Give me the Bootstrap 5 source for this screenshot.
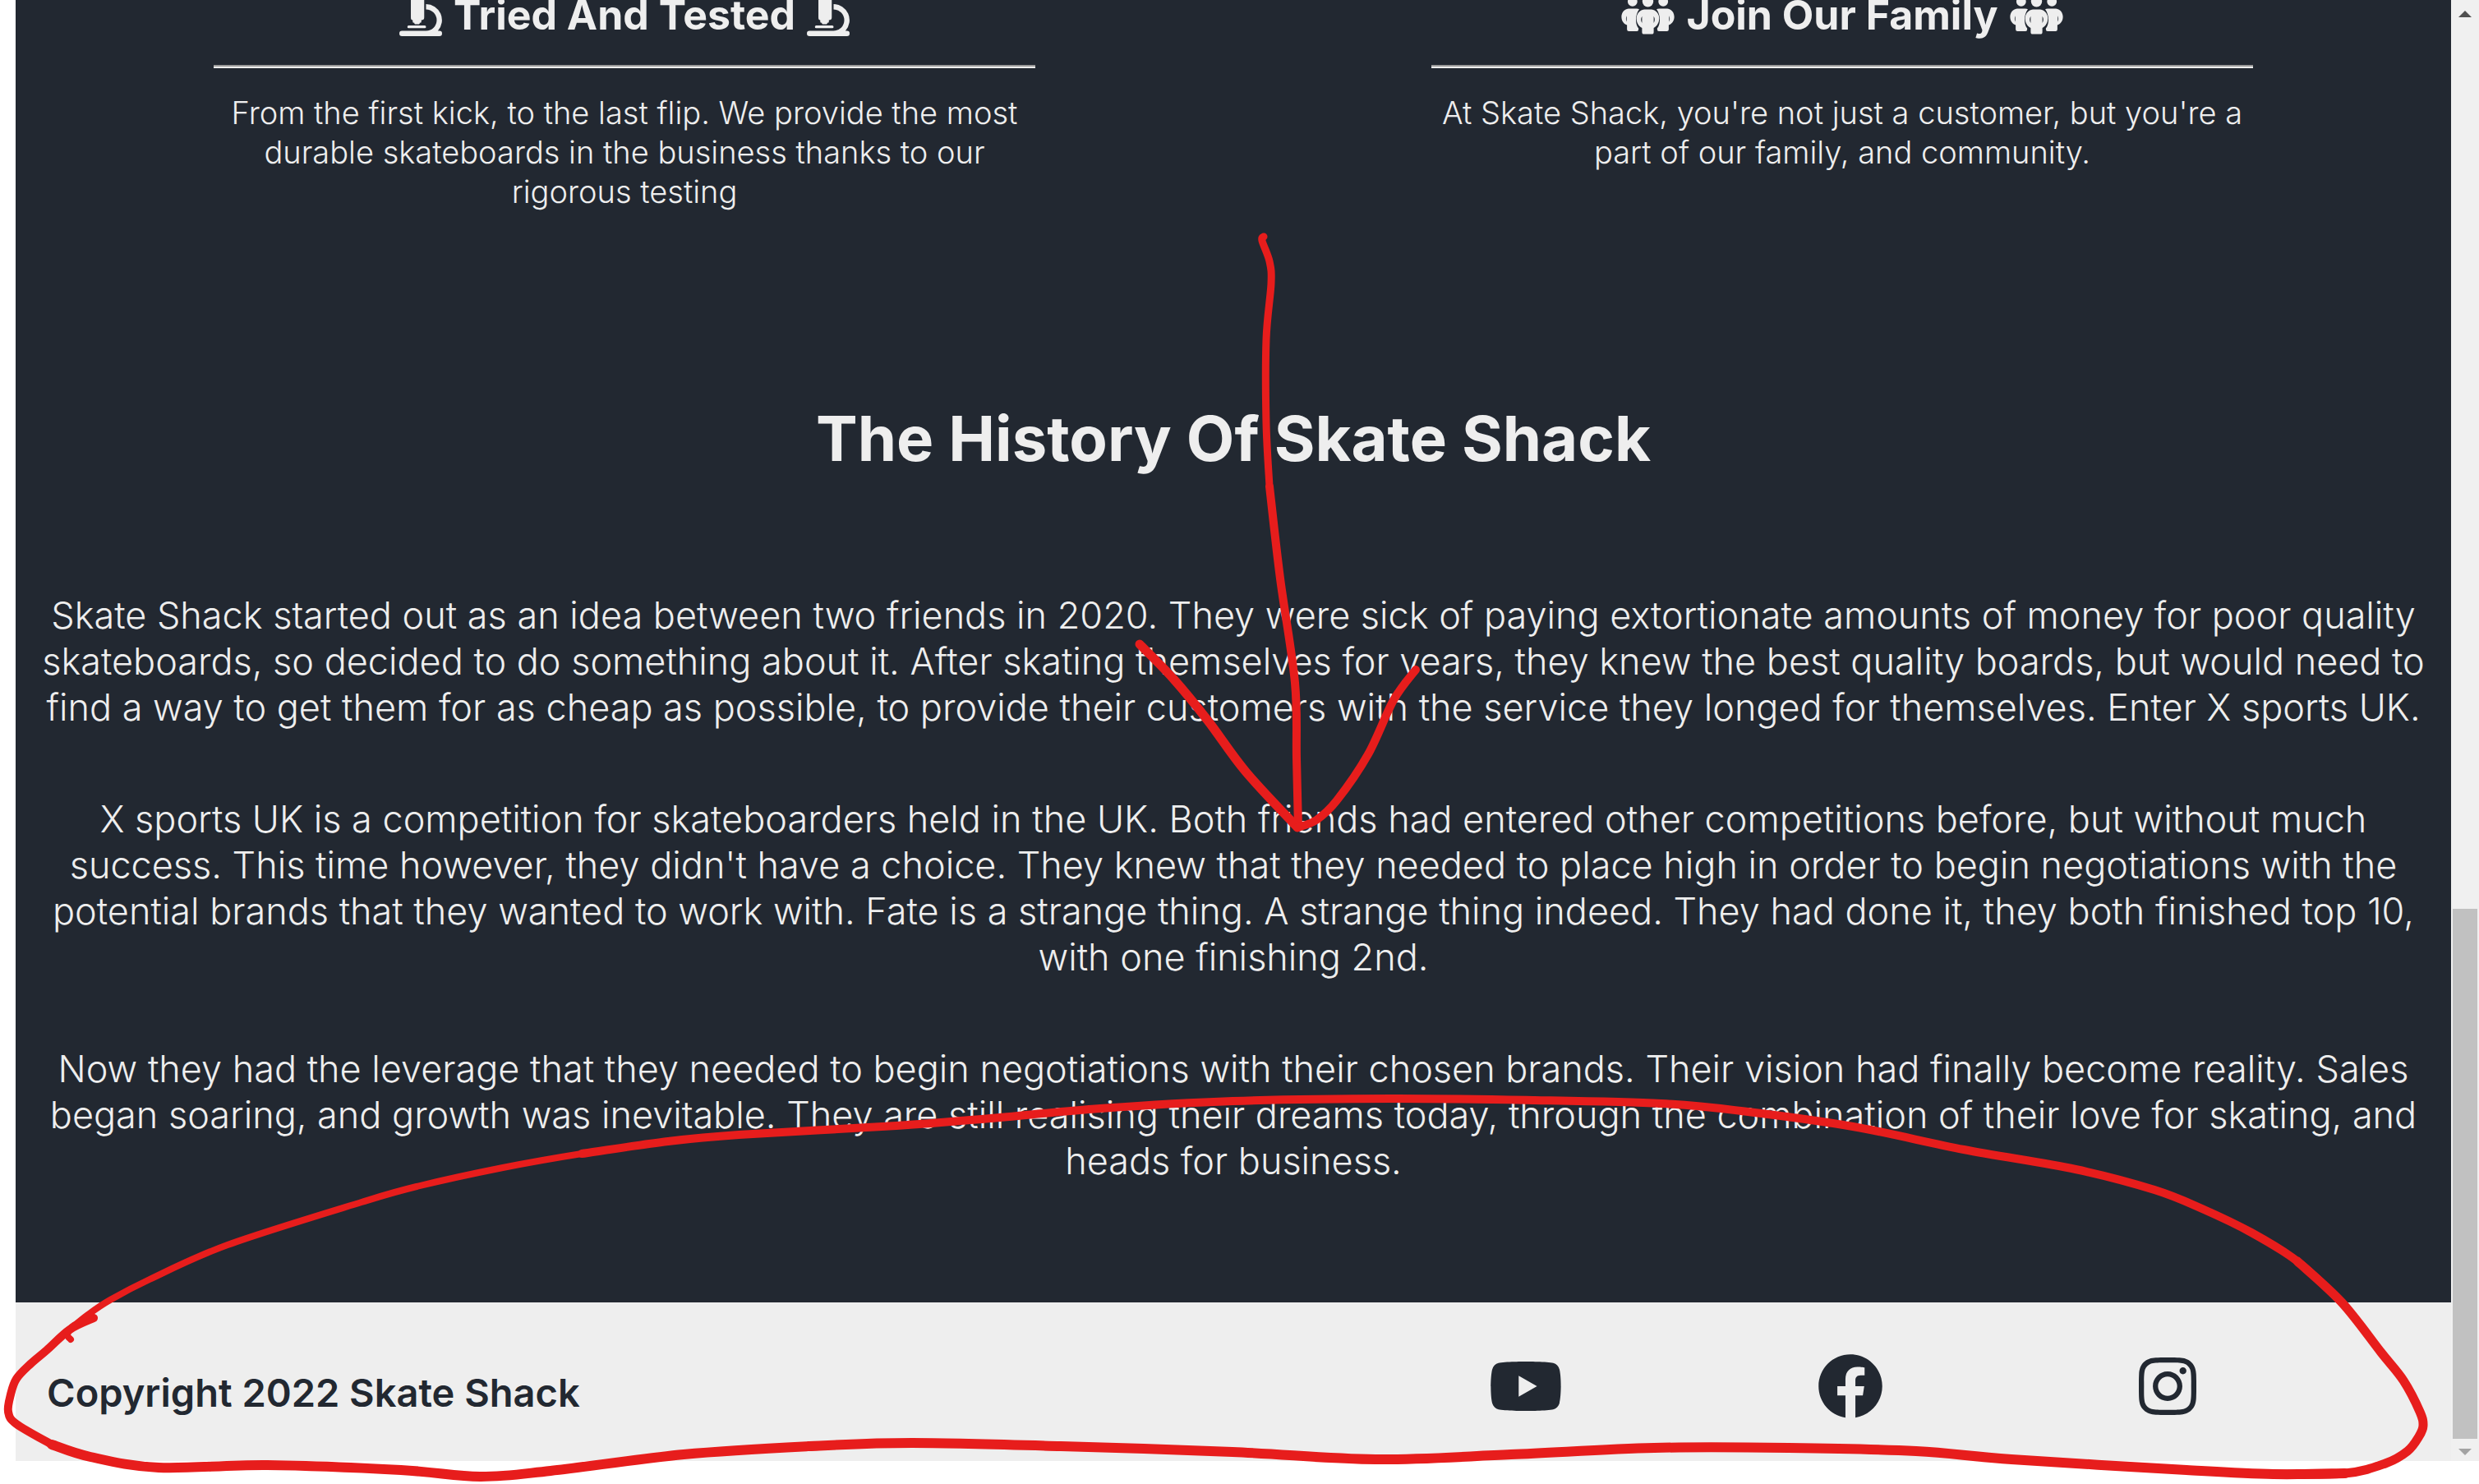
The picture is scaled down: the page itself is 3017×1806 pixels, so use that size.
<!DOCTYPE html>
<html lang="en">
<head>
<meta charset="utf-8">
<meta name="viewport" content="width=device-width, initial-scale=1">
<title>Skate Shack</title>
<link href="https://cdn.jsdelivr.net/npm/bootstrap@5.3.0/dist/css/bootstrap.min.css" rel="stylesheet">
<style>
  body { background: #fff; font-family: Inter, "Liberation Sans", sans-serif; font-weight: 300; }
  .page-wrap { padding: 0 0 28px 19px; }
  .site-main { background: #222831; color: #eee; padding-bottom: 144px; }
  .feature-inner { max-width: 1000px; }
  .feature-title { gap: 14px; font-size: 50px; line-height: 36px; font-weight: 700; height: 36px; white-space: nowrap; }
  .feature-title svg { height: 52px; flex: none; }
  .feature-rule { border: 0; border-top: 2px solid #9a9a9a; border-bottom: 2px solid #eee; opacity: 1; margin: 43px 0 30px; }
  .feature-text { font-size: 38px; line-height: 48px; }
  .history { padding: 228px 30px 0; }
  .history-title { font-size: 76px; line-height: 96px; font-weight: 700; margin-bottom: 140px; }
  .history-text { font-size: 45px; line-height: 56px; margin-bottom: 80px; }
  .site-footer { background: #eee; color: #222831; padding: 62px 0 51px; }
  .copyright { font-size: 47px; line-height: 64px; font-weight: 600; padding-left: 38px; }
  .social a { color: inherit; }
  .social svg { height: 80px; display: block; }
  .scroll-track { width: 34px; background: #f0f0f0; }
  .scroll-end { height: 34px; }
  .scroll-end-low { height: 27px; }
  .scroll-space { flex: 1072 1 0; }
  .scroll-thumb { flex: 645 1 0; background: #c1c1c1; margin: 0 2px; }
  .ink { pointer-events: none; fill: none; stroke: #e71d1c; stroke-linecap: round; stroke-linejoin: round; }
</style>
</head>
<body>
<svg class="d-none">
  <symbol id="microscope" viewBox="0 0 512 512">
    <path fill="currentColor" d="M160 320v16q0 16 16 16h4v8q0 8 8 8h48q8 0 8-8v-8h4q16 0 16-16v-16q34 0 34-32V64q0-32-32-32V16q0-16-16-16h-64q-16 0-16 16v16q-32 0-32 32v224q0 32 22 32zM112 384h192q16 0 16 16t-16 16H112q-16 0-16-16t16-16z"/>
    <path fill="currentColor" d="M320 128a192 192 0 0 1 142 320h18a32 32 0 0 1 0 64H32a32 32 0 0 1 0-64h288a128 128 0 0 0 0-256z"/>
  </symbol>
  <symbol id="people" viewBox="0 0 640 512">
    <g fill="currentColor">
      <circle cx="136" cy="98" r="58"/><circle cx="504" cy="98" r="58"/><circle cx="320" cy="96" r="66"/>
      <path d="M88 182h96q22 0 32 8c-48 60-52 180-8 228v12q0 22-20 22H92q-22 0-22-22v-50C-22 350-20 196 88 182zM66 268q-16 36 0 72zM552 182h-96q-22 0-32 8c48 60 52 180 8 228v12q0 22 20 22h96q22 0 22-22v-50c92-30 90-184-18-198zM574 268q16 36 0 72z" fill-rule="evenodd"/>
      <path d="M276 192h88c120 20 116 176 26 222v48q0 26-24 26h-92q-24 0-24-26v-48c-90-46-94-202 26-222zM250 272q-24 40 0 82zM390 272q24 40 0 82z" fill-rule="evenodd"/>
    </g>
  </symbol>
</svg>

<div class="page-wrap position-relative">
  <div class="d-flex align-items-stretch">
    <div class="flex-grow-1">
      <main class="site-main text-center">
        <section class="row g-0">
          <div class="col-6">
            <div class="feature-inner mx-auto">
              <h3 class="feature-title d-flex justify-content-center align-items-center mb-0">
                <svg viewBox="0 0 512 512" aria-hidden="true"><use href="#microscope"/></svg>
                <span>Tried And Tested</span>
                <svg viewBox="0 0 512 512" aria-hidden="true"><use href="#microscope"/></svg>
              </h3>
              <hr class="feature-rule">
              <p class="feature-text mb-0">From the first kick, to the last flip. We provide the most durable skateboards in the business thanks to our rigorous testing</p>
            </div>
          </div>
          <div class="col-6">
            <div class="feature-inner mx-auto">
              <h3 class="feature-title d-flex justify-content-center align-items-center mb-0">
                <svg viewBox="0 0 640 512" aria-hidden="true"><use href="#people"/></svg>
                <span>Join Our Family</span>
                <svg viewBox="0 0 640 512" aria-hidden="true"><use href="#people"/></svg>
              </h3>
              <hr class="feature-rule">
              <p class="feature-text mb-0">At Skate Shack, you're not just a customer, but you're a part of our family, and community.</p>
            </div>
          </div>
        </section>
        <section class="history">
          <h1 class="history-title">The History Of Skate Shack</h1>
          <p class="history-text">Skate Shack started out as an idea between two friends in 2020. They were sick of paying extortionate amounts of money for poor quality skateboards, so decided to do something about it. After skating themselves for years, they knew the best quality boards, but would need to find a way to get them for as cheap as possible, to provide their customers with the service they longed for themselves. Enter X sports UK.</p>
          <p class="history-text">X sports UK is a competition for skateboarders held in the UK. Both friends had entered other competitions before, but without much success. This time however, they didn't have a choice. They knew that they needed to place high in order to begin negotiations with the potential brands that they wanted to work with. Fate is a strange thing. A strange thing indeed. They had done it, they both finished top 10, with one finishing 2nd.</p>
          <p class="history-text mb-0">Now they had the leverage that they needed to begin negotiations with their chosen brands. Their vision had finally become reality. Sales began soaring, and growth was inevitable. They are still realising their dreams today, through the combination of their love for skating, and heads for business.</p>
        </section>
      </main>
      <footer class="site-footer d-flex align-items-end">
        <div class="copyright w-50">Copyright 2022 Skate Shack</div>
        <nav class="social w-50 d-flex justify-content-evenly" aria-label="Social media">
          <a href="#" aria-label="YouTube"><svg viewBox="0 0 576 512"><path fill="currentColor" d="M549.655 124.083c-6.281-23.65-24.787-42.276-48.284-48.597C458.781 64 288 64 288 64S117.22 64 74.629 75.486c-23.497 6.322-42.003 24.947-48.284 48.597-11.412 42.867-11.412 132.305-11.412 132.305s0 89.438 11.412 132.305c6.281 23.65 24.787 41.5 48.284 47.821C117.22 448 288 448 288 448s170.78 0 213.371-11.486c23.497-6.321 42.003-24.171 48.284-47.821 11.412-42.867 11.412-132.305 11.412-132.305s0-89.438-11.412-132.305zm-317.51 213.508V175.185l142.739 81.205-142.739 81.201z"/></svg></a>
          <a href="#" aria-label="Facebook"><svg viewBox="0 0 512 512"><path fill="currentColor" d="M504 256C504 119 393 8 256 8S8 119 8 256c0 123.78 90.69 226.38 209.25 245V327.69h-63V256h63v-54.64c0-62.15 37-96.48 93.67-96.48 27.14 0 55.52 4.84 55.52 4.84v61h-31.28c-30.8 0-40.41 19.12-40.41 38.73V256h68.78l-11 71.69h-57.78V501C413.31 482.38 504 379.78 504 256z"/></svg></a>
          <a href="#" aria-label="Instagram"><svg viewBox="0 0 448 512"><path fill="currentColor" d="M224.1 141c-63.6 0-114.9 51.3-114.9 114.9s51.3 114.9 114.9 114.9S339 319.5 339 255.900 287.7 141 224.100 141zm0 189.600c-41.100 0-74.700-33.500-74.700-74.700s33.500-74.700 74.700-74.700 74.700 33.500 74.700 74.700-33.600 74.700-74.700 74.700zm146.400-194.300c0 14.900-12 26.800-26.800 26.800-14.900 0-26.800-12-26.800-26.800s12-26.800 26.800-26.800 26.800 12 26.800 26.800zm76.100 27.200c-1.700-35.900-9.900-67.700-36.200-93.900-26.200-26.200-58-34.400-93.900-36.200-37-2.100-147.900-2.100-184.900 0-35.800 1.700-67.600 9.900-93.900 36.100s-34.400 58-36.200 93.900c-2.100 37-2.100 147.900 0 184.900 1.700 35.900 9.900 67.700 36.200 93.900s58 34.400 93.900 36.200c37 2.100 147.900 2.100 184.900 0 35.900-1.700 67.700-9.900 93.900-36.200 26.200-26.200 34.400-58 36.200-93.900 2.100-37 2.100-147.800 0-184.800zM398.800 388c-7.800 19.600-22.900 34.700-42.600 42.600-29.500 11.700-99.500 9-132.100 9s-102.700 2.600-132.100-9c-19.600-7.800-34.700-22.900-42.600-42.600-11.700-29.500-9-99.500-9-132.100s-2.600-102.700 9-132.100c7.800-19.600 22.900-34.700 42.600-42.600 29.500-11.700 99.500-9 132.100-9s102.700-2.600 132.100 9c19.600 7.800 34.700 22.900 42.600 42.600 11.700 29.500 9 99.500 9 132.100s2.700 102.700-9 132.100z"/></svg></a>
        </nav>
      </footer>
    </div>
    <div class="scroll-track d-flex flex-column flex-shrink-0" aria-hidden="true">
      <svg class="scroll-end" viewBox="0 0 34 34"><path fill="#505050" d="M17 13l8 8H9z"/></svg>
      <div class="scroll-space"></div>
      <div class="scroll-thumb"></div>
      <svg class="scroll-end-low" viewBox="0 0 34 27"><path fill="#a3a3a3" d="M9 12h16l-8 8z"/></svg>
    </div>
  </div>

  <svg class="ink position-absolute top-0 start-0 w-100 h-100" viewBox="0 0 3017 1806" aria-hidden="true">
    <path stroke-width="9" data-points="1538,288 1536,293 1545,318 1547,345 1541,413 1541,515 1545,592"/>
    <path stroke-width="10" data-points="1545,592 1558,704 1576,831 1578,923 1580,1007"/>
    <path stroke-width="11" data-points="1387,784 1428,826 1470,877 1516,939 1579,1007"/>
    <path stroke-width="10" data-points="1579,1007 1602,998 1627,974 1665,918 1696,852 1723,815"/>
    <path stroke-width="10" data-points="114,1604 85,1618 57,1643 37,1660 20,1678 13,1697 10,1718 20,1733 63,1758"/>
    <path stroke-width="8" data-points="86,1630 82,1624 90,1613 114,1604 107,1605"/>
    <path stroke-width="12" data-points="63,1758 110,1773 193,1786 325,1783 488,1789 584,1797 670,1790 832,1770 985,1760 1110,1756 1291,1760 1500,1767 1674,1776 1839,1770 2013,1762 2177,1762 2332,1766 2448,1776 2661,1789 2767,1794 2854,1793"/>
    <path stroke-width="11" data-points="2767,1794 2854,1793 2903,1781 2930,1766 2944,1748 2949,1735 2945,1718 2925,1680 2898,1646 2850,1585 2796,1535"/>
    <path stroke-width="10" data-points="2850,1585 2796,1535 2740,1500 2680,1471 2622,1448 2526,1423 2390,1399 2255,1371 2119,1352 2022,1343 1868,1339 1693,1337 1500,1340 1339,1349 1205,1361 1091,1370 899,1381 813,1389 708,1404"/>
    <path stroke-width="8" data-points="813,1389 708,1404 612,1421 507,1444 440,1463 277,1515 182,1557 134,1582 107,1600 81,1621"/>
  </svg>
</div>

<script>
  // Turns each stroke's points into one smooth curve that passes through all of them.
  document.querySelectorAll('.ink path').forEach(function (path) {
    var p = path.dataset.points.split(' ').map(function (s) { return s.split(',').map(Number); });
    var d = 'M' + p[0];
    for (var i = 0; i < p.length - 1; i++) {
      var a = p[i - 1] || p[i], b = p[i], c = p[i + 1], e = p[i + 2] || c;
      d += 'C' + [b[0] + (c[0] - a[0]) / 6, b[1] + (c[1] - a[1]) / 6,
                  c[0] - (e[0] - b[0]) / 6, c[1] - (e[1] - b[1]) / 6, c[0], c[1]].join(' ');
    }
    path.setAttribute('d', d);
  });
</script>
<script src="https://cdn.jsdelivr.net/npm/bootstrap@5.3.0/dist/js/bootstrap.bundle.min.js"></script>
</body>
</html>
